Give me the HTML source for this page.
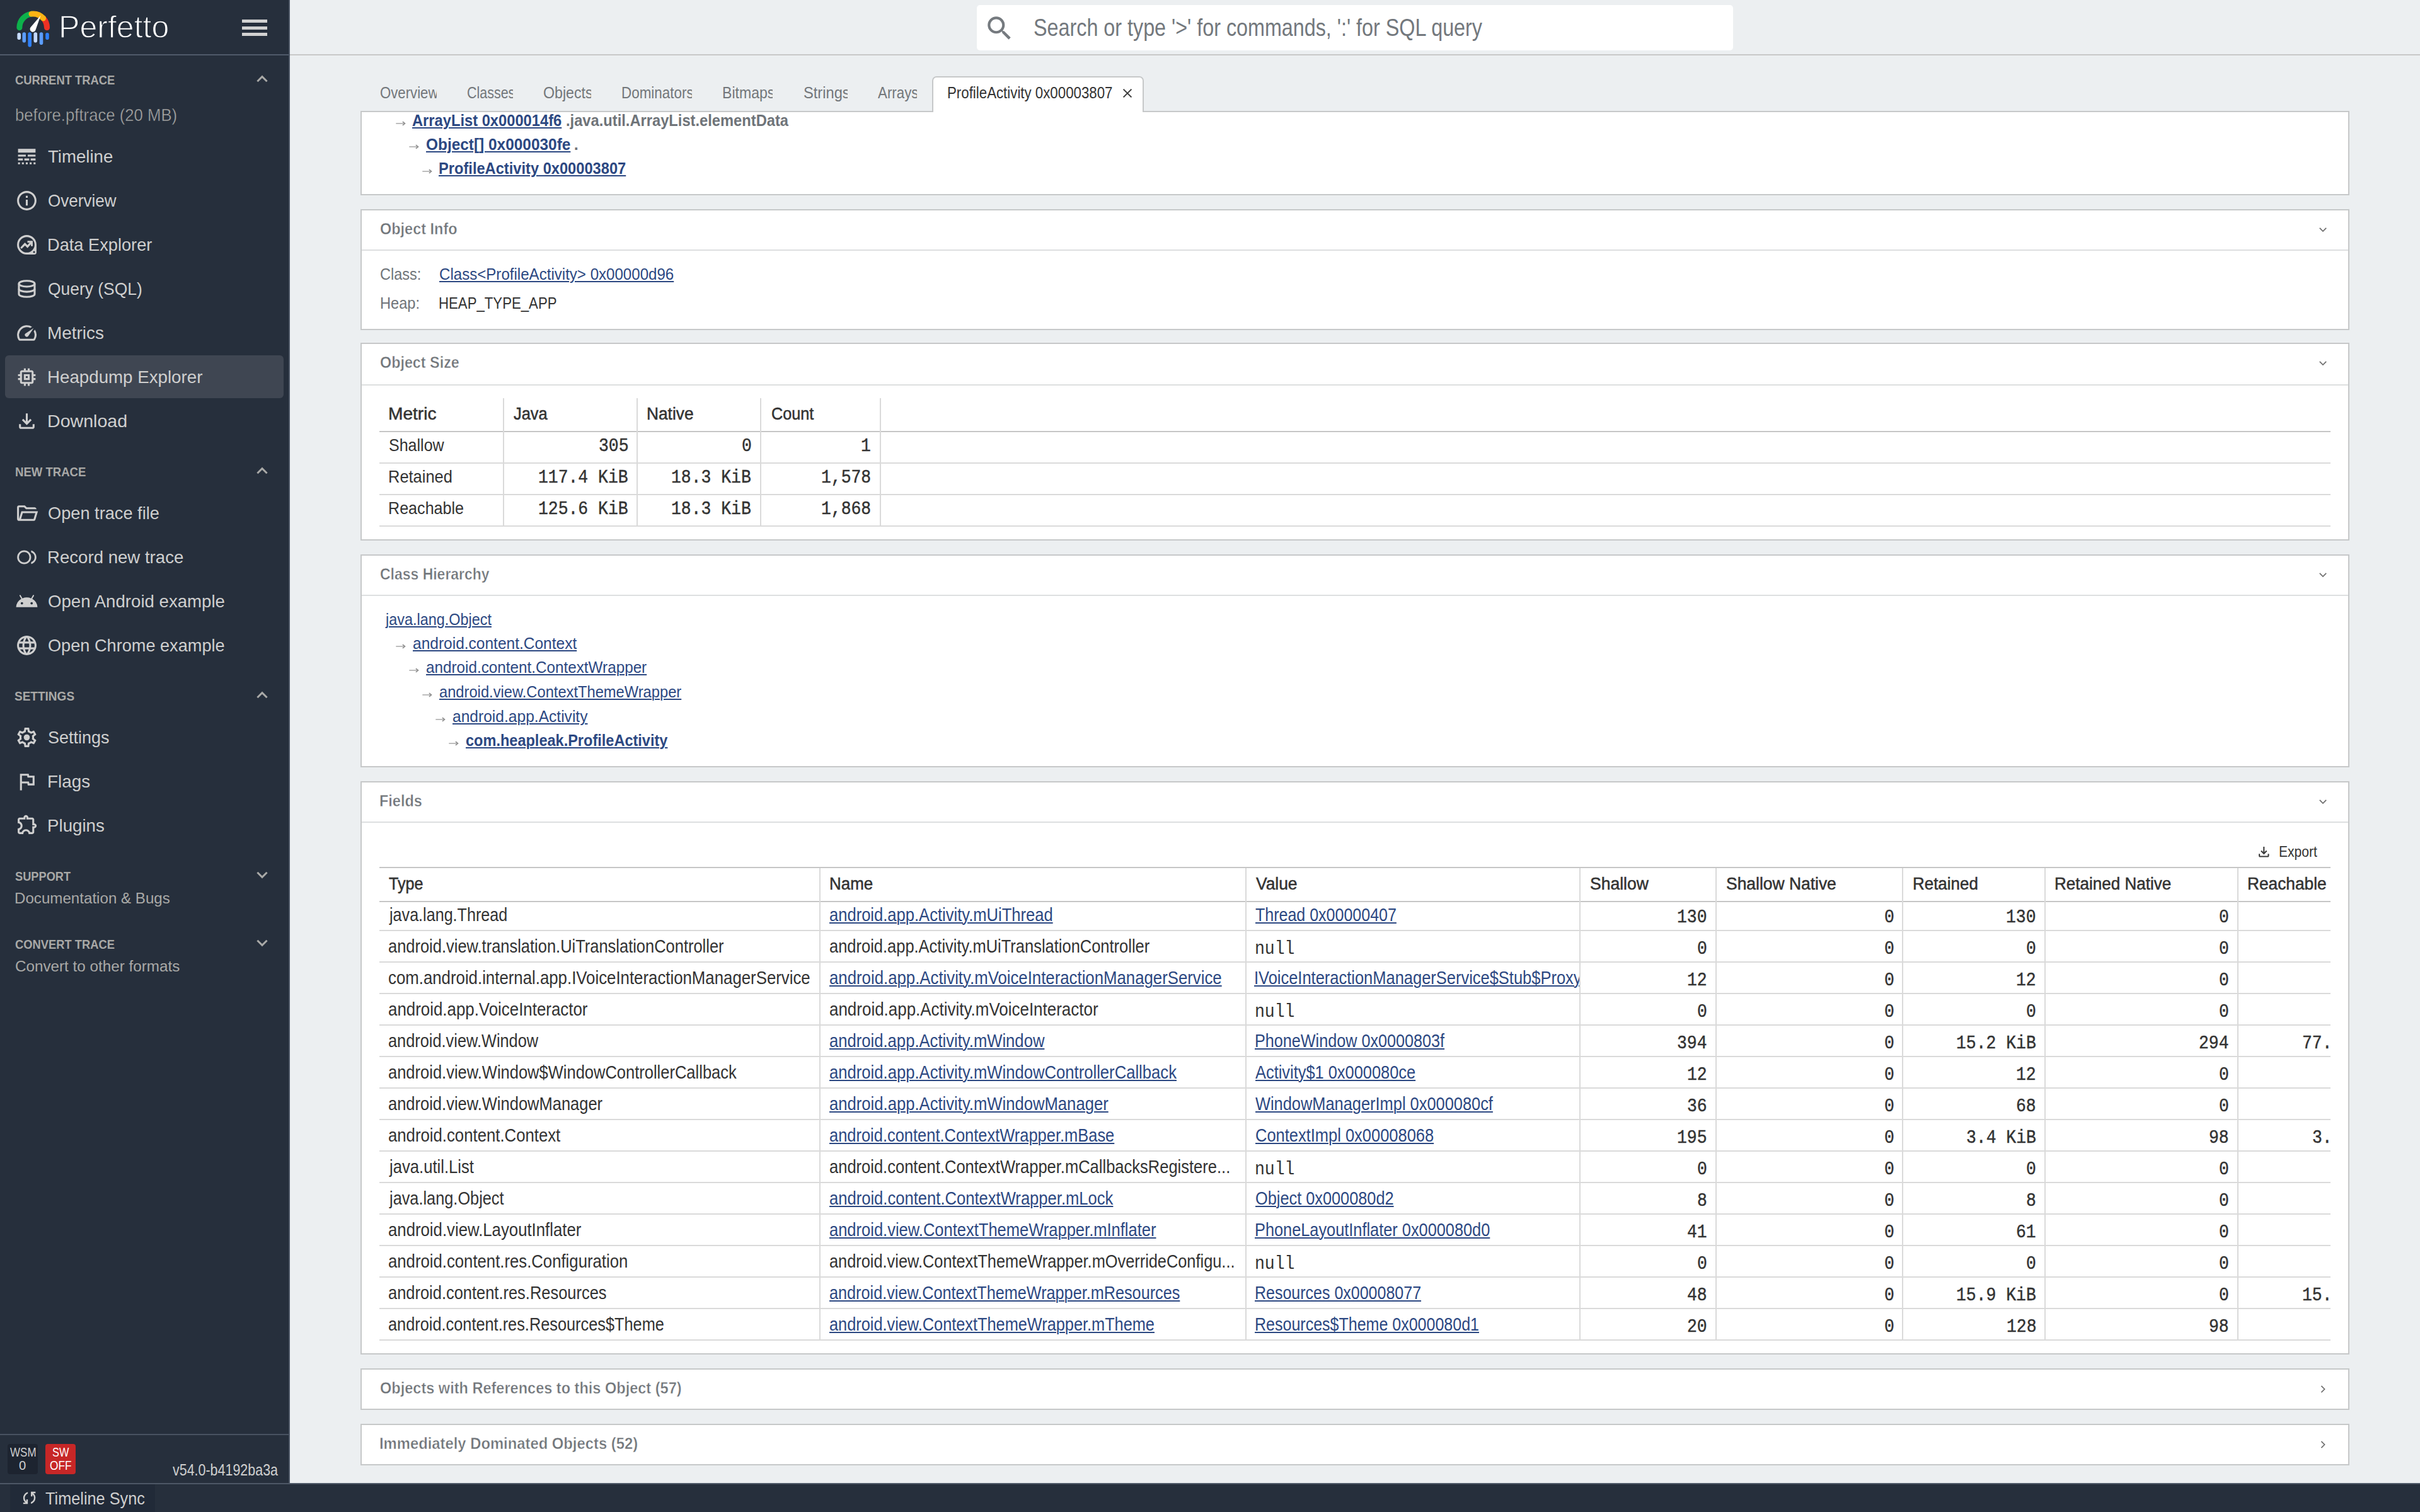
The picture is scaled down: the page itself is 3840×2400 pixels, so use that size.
<!DOCTYPE html>
<html lang="en"><head><meta charset="utf-8"><title>Perfetto UI - Heapdump Explorer</title><style>
html,body{margin:0;padding:0}
body{width:3840px;height:2400px;position:relative;overflow:hidden;background:#eceff1;font-family:"Liberation Sans",sans-serif}
#app div,#app svg,#app span.t{position:absolute}
.t{white-space:pre;line-height:1;transform-origin:0 0;display:block}
.m{font-family:"Liberation Mono",monospace}
.b{font-weight:bold}
.u{text-decoration:underline;text-decoration-thickness:2px;text-underline-offset:2px}
.clip{overflow:hidden}
</style></head>
<body><div id="app">
<div style="left:0px;top:0px;width:458px;height:2354px;background:#262f3c;"></div>
<div style="left:458px;top:0px;width:2px;height:2354px;background:#485261;"></div>
<div style="left:0px;top:86px;width:458px;height:2px;background:#505a6a;"></div>
<div style="left:384px;top:31px;width:40px;height:5px;background:#d2d2d2;"></div>
<div style="left:384px;top:41.5px;width:40px;height:5px;background:#d2d2d2;"></div>
<div style="left:384px;top:52px;width:40px;height:5px;background:#d2d2d2;"></div>
<div style="left:8px;top:564px;width:442px;height:68px;background:#3f4652;border-radius:6px"></div>
<div style="left:0px;top:2276px;width:458px;height:2px;background:#485261;"></div>
<div style="left:12px;top:2292px;width:48px;height:48px;background:#1d2430;border-radius:4px"></div>
<div style="left:72px;top:2292px;width:48px;height:48px;background:#c72727;border-radius:4px"></div>
<div style="left:0px;top:2354px;width:3840px;height:46px;background:#262f3c;"></div>
<div style="left:0px;top:2354px;width:3840px;height:2px;background:#4d5766;"></div>
<div style="left:16px;top:2356px;width:230px;height:44px;background:#212a38;"></div>
<div style="left:460px;top:86px;width:3380px;height:2px;background:#c8c8c8;"></div>
<div style="left:1550px;top:8px;width:1200px;height:72px;background:#ffffff;border-radius:5px"></div>
<div style="left:572px;top:176px;width:3156px;height:2px;background:#c6c8c9;"></div>
<div style="left:1479px;top:121px;width:336px;height:57px;background:#c6c8c9;border-radius:7px 7px 0 0"></div>
<div style="left:1481px;top:123px;width:332px;height:56px;background:#ffffff;border-radius:5px 5px 0 0"></div>
<div style="left:572px;top:176px;width:2px;height:134px;background:#c6c8c9;"></div>
<div style="left:3726px;top:176px;width:2px;height:134px;background:#c6c8c9;"></div>
<div style="left:572px;top:308px;width:3156px;height:2px;background:#c6c8c9;"></div>
<div style="left:574px;top:178px;width:3152px;height:130px;background:#ffffff;"></div>
<div style="left:572px;top:332px;width:3156px;height:192px;background:#c6c8c9;"></div>
<div style="left:574px;top:334px;width:3152px;height:188px;background:#ffffff;"></div>
<div style="left:574px;top:396px;width:3152px;height:2px;background:#dddfe0;"></div>
<div style="left:572px;top:544px;width:3156px;height:314px;background:#c6c8c9;"></div>
<div style="left:574px;top:546px;width:3152px;height:310px;background:#ffffff;"></div>
<div style="left:574px;top:610px;width:3152px;height:2px;background:#dddfe0;"></div>
<div style="left:602px;top:684px;width:3096px;height:2px;background:#c6c6c6;"></div>
<div style="left:602px;top:734px;width:3096px;height:2px;background:#dadada;"></div>
<div style="left:602px;top:784px;width:3096px;height:2px;background:#dadada;"></div>
<div style="left:602px;top:834px;width:3096px;height:2px;background:#dadada;"></div>
<div style="left:798px;top:632px;width:2px;height:204px;background:#dadada;"></div>
<div style="left:1010px;top:632px;width:2px;height:204px;background:#dadada;"></div>
<div style="left:1206px;top:632px;width:2px;height:204px;background:#dadada;"></div>
<div style="left:1396px;top:632px;width:2px;height:204px;background:#dadada;"></div>
<div style="left:572px;top:880px;width:3156px;height:338px;background:#c6c8c9;"></div>
<div style="left:574px;top:882px;width:3152px;height:334px;background:#ffffff;"></div>
<div style="left:574px;top:944px;width:3152px;height:2px;background:#dddfe0;"></div>
<div style="left:572px;top:1240px;width:3156px;height:910px;background:#c6c8c9;"></div>
<div style="left:574px;top:1242px;width:3152px;height:906px;background:#ffffff;"></div>
<div style="left:574px;top:1304px;width:3152px;height:2px;background:#dddfe0;"></div>
<div style="left:602px;top:1376px;width:3096px;height:2px;background:#c6c6c6;"></div>
<div style="left:602px;top:1430px;width:3096px;height:2px;background:#c6c6c6;"></div>
<div style="left:602px;top:1476px;width:3096px;height:2px;background:#dadada;"></div>
<div style="left:602px;top:1526px;width:3096px;height:2px;background:#dadada;"></div>
<div style="left:602px;top:1576px;width:3096px;height:2px;background:#dadada;"></div>
<div style="left:602px;top:1626px;width:3096px;height:2px;background:#dadada;"></div>
<div style="left:602px;top:1676px;width:3096px;height:2px;background:#dadada;"></div>
<div style="left:602px;top:1726px;width:3096px;height:2px;background:#dadada;"></div>
<div style="left:602px;top:1776px;width:3096px;height:2px;background:#dadada;"></div>
<div style="left:602px;top:1826px;width:3096px;height:2px;background:#dadada;"></div>
<div style="left:602px;top:1876px;width:3096px;height:2px;background:#dadada;"></div>
<div style="left:602px;top:1926px;width:3096px;height:2px;background:#dadada;"></div>
<div style="left:602px;top:1976px;width:3096px;height:2px;background:#dadada;"></div>
<div style="left:602px;top:2026px;width:3096px;height:2px;background:#dadada;"></div>
<div style="left:602px;top:2076px;width:3096px;height:2px;background:#dadada;"></div>
<div style="left:602px;top:2126px;width:3096px;height:2px;background:#dadada;"></div>
<div style="left:1300px;top:1378px;width:2px;height:750px;background:#dadada;"></div>
<div style="left:1976px;top:1378px;width:2px;height:750px;background:#dadada;"></div>
<div style="left:2506px;top:1378px;width:2px;height:750px;background:#dadada;"></div>
<div style="left:2722px;top:1378px;width:2px;height:750px;background:#dadada;"></div>
<div style="left:3018px;top:1378px;width:2px;height:750px;background:#dadada;"></div>
<div style="left:3244px;top:1378px;width:2px;height:750px;background:#dadada;"></div>
<div style="left:3550px;top:1378px;width:2px;height:750px;background:#dadada;"></div>
<div style="left:572px;top:2172px;width:3156px;height:66px;background:#c6c8c9;"></div>
<div style="left:574px;top:2174px;width:3152px;height:62px;background:#ffffff;"></div>
<div style="left:572px;top:2260px;width:3156px;height:66px;background:#c6c8c9;"></div>
<div style="left:574px;top:2262px;width:3152px;height:62px;background:#ffffff;"></div>
<span class="t" style="left:93.25px;top:18.00px;font-size:50.72px;color:#ffffff;transform:scaleX(0.9872);-webkit-text-stroke:1.3px #262f3c">Perfetto</span>
<span class="t b" style="left:23.51px;top:117.00px;font-size:20.72px;color:#a9a9a7;transform:scaleX(0.8876)">CURRENT TRACE</span>
<span class="t" style="left:23.59px;top:168.00px;font-size:28.41px;color:#a9a9a7;transform:scaleX(0.9046);-webkit-text-stroke:0.5px #262f3c">before.pftrace (20 MB)</span>
<span class="t b" style="left:23.50px;top:739.00px;font-size:20.72px;color:#a9a9a7;transform:scaleX(0.8960)">NEW TRACE</span>
<span class="t b" style="left:23.48px;top:1095.00px;font-size:20.72px;color:#a9a9a7;transform:scaleX(0.9176)">SETTINGS</span>
<span class="t b" style="left:23.52px;top:1381.00px;font-size:20.72px;color:#a9a9a7;transform:scaleX(0.8798)">SUPPORT</span>
<span class="t" style="left:23.24px;top:1414.00px;font-size:24.64px;color:#a9a9a7;transform:scaleX(0.9799)">Documentation &amp; Bugs</span>
<span class="t b" style="left:23.51px;top:1489.00px;font-size:20.72px;color:#a9a9a7;transform:scaleX(0.8859)">CONVERT TRACE</span>
<span class="t" style="left:24.22px;top:1522.00px;font-size:24.64px;color:#a9a9a7;transform:scaleX(0.9841)">Convert to other formats</span>
<span class="t" style="left:76.23px;top:234.00px;font-size:28.41px;color:#cfcfcf;transform:scaleX(0.9712)">Timeline</span>
<span class="t" style="left:76.28px;top:304.00px;font-size:28.41px;color:#cfcfcf;transform:scaleX(0.9171)">Overview</span>
<span class="t" style="left:75.28px;top:374.00px;font-size:28.41px;color:#cfcfcf;transform:scaleX(0.9579)">Data Explorer</span>
<span class="t" style="left:76.27px;top:444.00px;font-size:28.41px;color:#cfcfcf;transform:scaleX(0.9304)">Query (SQL)</span>
<span class="t" style="left:75.23px;top:514.00px;font-size:28.41px;color:#cfcfcf;transform:scaleX(0.9831)">Metrics</span>
<span class="t" style="left:75.25px;top:584.00px;font-size:28.41px;color:#cfcfcf;transform:scaleX(0.9752)">Heapdump Explorer</span>
<span class="t" style="left:75.19px;top:654.00px;font-size:28.41px;color:#cfcfcf;transform:scaleX(1.0065)">Download</span>
<span class="t" style="left:76.24px;top:800.00px;font-size:28.41px;color:#cfcfcf;transform:scaleX(0.9574)">Open trace file</span>
<span class="t" style="left:75.26px;top:870.00px;font-size:28.41px;color:#cfcfcf;transform:scaleX(0.9717)">Record new trace</span>
<span class="t" style="left:76.23px;top:940.00px;font-size:28.41px;color:#cfcfcf;transform:scaleX(0.9721)">Open Android example</span>
<span class="t" style="left:76.24px;top:1010.00px;font-size:28.41px;color:#cfcfcf;transform:scaleX(0.9555)">Open Chrome example</span>
<span class="t" style="left:76.25px;top:1156.00px;font-size:28.41px;color:#cfcfcf;transform:scaleX(0.9505)">Settings</span>
<span class="t" style="left:75.24px;top:1226.00px;font-size:28.41px;color:#cfcfcf;transform:scaleX(0.9806)">Flags</span>
<span class="t" style="left:75.25px;top:1296.00px;font-size:28.41px;color:#cfcfcf;transform:scaleX(0.9756)">Plugins</span>
<span class="t" style="left:16.20px;top:2296.00px;font-size:19.42px;color:#cfcfcf;transform:scaleX(0.8761)">WSM</span>
<span class="t" style="left:30.36px;top:2317.00px;font-size:19.42px;color:#cfcfcf;transform:scaleX(1.0444)">0</span>
<span class="t" style="left:82.56px;top:2296.00px;font-size:19.42px;color:#ffffff;transform:scaleX(0.8433)">SW</span>
<span class="t" style="left:79.11px;top:2317.00px;font-size:19.42px;color:#ffffff;transform:scaleX(0.8919)">OFF</span>
<span class="t" style="left:274.40px;top:2321.00px;font-size:24.93px;color:#cfcfcf;transform:scaleX(0.8608)">v54.0-b4192ba3a</span>
<span class="t" style="left:71.70px;top:2365.00px;font-size:28.12px;color:#cfcfcf;transform:scaleX(0.9000)">Timeline Sync</span>
<span class="t" style="left:1639.92px;top:25.00px;font-size:38.55px;color:#73787d;transform:scaleX(0.8380)">Search or type &#x27;&gt;&#x27; for commands, &#x27;:&#x27; for SQL query</span>
<div class="clip" style="left:599.8px;top:135.00px;width:92.80000000000007px;height:33.2px"><span class="t" style="left:3.13px;top:0px;font-size:25.51px;color:#73777b;transform:scaleX(0.8695)">Overview</span></div>
<div class="clip" style="left:737.8px;top:135.00px;width:76.40000000000009px;height:33.2px"><span class="t" style="left:3.16px;top:0px;font-size:25.51px;color:#73777b;transform:scaleX(0.8416)">Classes</span></div>
<div class="clip" style="left:859.4px;top:135.00px;width:78.80000000000007px;height:33.2px"><span class="t" style="left:3.09px;top:0px;font-size:25.51px;color:#73777b;transform:scaleX(0.9094)">Objects</span></div>
<div class="clip" style="left:984.2px;top:135.00px;width:114.0px;height:33.2px"><span class="t" style="left:2.24px;top:0px;font-size:25.51px;color:#73777b;transform:scaleX(0.8789)">Dominators</span></div>
<div class="clip" style="left:1144.2px;top:135.00px;width:82.0px;height:33.2px"><span class="t" style="left:2.19px;top:0px;font-size:25.51px;color:#73777b;transform:scaleX(0.9045)">Bitmaps</span></div>
<div class="clip" style="left:1271.6px;top:135.00px;width:73.0px;height:33.2px"><span class="t" style="left:3.07px;top:0px;font-size:25.51px;color:#73777b;transform:scaleX(0.9286)">Strings</span></div>
<div class="clip" style="left:1389.2px;top:135.00px;width:65.39999999999986px;height:33.2px"><span class="t" style="left:4.00px;top:0px;font-size:25.51px;color:#73777b;transform:scaleX(0.8753)">Arrays</span></div>
<span class="t" style="left:1502.85px;top:135.00px;font-size:25.51px;color:#333333;transform:scaleX(0.8734)">ProfileActivity 0x00003807</span>
<span class="t b u" style="left:654.27px;top:179.00px;font-size:25.36px;color:#2c4882;transform:scaleX(0.9349)">ArrayList 0x000014f6</span>
<span class="t b" style="left:897.73px;top:179.00px;font-size:25.36px;color:#6f7479;transform:scaleX(0.9346)">.java.util.ArrayList.elementData</span>
<span class="t b u" style="left:675.64px;top:217.00px;font-size:25.36px;color:#2c4882;transform:scaleX(0.9627)">Object[] 0x000030fe</span>
<span class="t b" style="left:910.80px;top:217.00px;font-size:25.36px;color:#6f7479">.</span>
<span class="t b u" style="left:695.93px;top:255.00px;font-size:25.36px;color:#2c4882;transform:scaleX(0.9329)">ProfileActivity 0x00003807</span>
<span class="t b" style="left:603.07px;top:351.00px;font-size:25.22px;color:#6f7479;transform:scaleX(0.9308);-webkit-text-stroke:0.45px #ffffff">Object Info</span>
<span class="t" style="left:603.07px;top:423.00px;font-size:25.22px;color:#6f7479;transform:scaleX(0.9313)">Class:</span>
<span class="t u" style="left:696.84px;top:423.00px;font-size:25.22px;color:#2c4882;transform:scaleX(0.9552)">Class&lt;ProfileActivity&gt; 0x00000d96</span>
<span class="t" style="left:602.73px;top:469.00px;font-size:25.22px;color:#6f7479;transform:scaleX(0.9365)">Heap:</span>
<span class="t" style="left:696.44px;top:469.00px;font-size:25.22px;color:#333333;transform:scaleX(0.8800)">HEAP_TYPE_APP</span>
<span class="t b" style="left:603.07px;top:563.00px;font-size:25.22px;color:#6f7479;transform:scaleX(0.9254);-webkit-text-stroke:0.45px #ffffff">Object Size</span>
<span class="t" style="left:616.00px;top:643.00px;font-size:28.12px;color:#333333;-webkit-text-stroke:0.55px #333333">Metric</span>
<span class="t" style="left:815.40px;top:643.00px;font-size:28.12px;color:#333333;transform:scaleX(0.9051);-webkit-text-stroke:0.55px #333333">Java</span>
<span class="t" style="left:1026.13px;top:643.00px;font-size:28.12px;color:#333333;transform:scaleX(0.9351);-webkit-text-stroke:0.55px #333333">Native</span>
<span class="t" style="left:1223.50px;top:643.00px;font-size:28.12px;color:#333333;transform:scaleX(0.8973);-webkit-text-stroke:0.55px #333333">Count</span>
<span class="t" style="left:616.52px;top:692.00px;font-size:28.41px;color:#333333;transform:scaleX(0.8808)">Shallow</span>
<span class="t m" style="left:949.74px;top:694.00px;font-size:29.55px;color:#333333;transform:scaleX(0.8935);-webkit-text-stroke:0.45px #333333">305</span>
<span class="t m" style="left:1177.10px;top:694.00px;font-size:29.55px;color:#333333;transform:scaleX(0.8935);-webkit-text-stroke:0.45px #333333">0</span>
<span class="t m" style="left:1366.30px;top:694.00px;font-size:29.55px;color:#333333;transform:scaleX(0.8935);-webkit-text-stroke:0.45px #333333">1</span>
<span class="t" style="left:615.61px;top:742.00px;font-size:28.41px;color:#333333;transform:scaleX(0.8964)">Retained</span>
<span class="t m" style="left:854.13px;top:744.00px;font-size:29.55px;color:#333333;transform:scaleX(0.8935);-webkit-text-stroke:0.45px #333333">117.4 KiB</span>
<span class="t m" style="left:1065.41px;top:744.00px;font-size:29.55px;color:#333333;transform:scaleX(0.8935);-webkit-text-stroke:0.45px #333333">18.3 KiB</span>
<span class="t m" style="left:1302.86px;top:744.00px;font-size:29.55px;color:#333333;transform:scaleX(0.8935);-webkit-text-stroke:0.45px #333333">1,578</span>
<span class="t" style="left:615.63px;top:792.00px;font-size:28.41px;color:#333333;transform:scaleX(0.8842)">Reachable</span>
<span class="t m" style="left:854.13px;top:794.00px;font-size:29.55px;color:#333333;transform:scaleX(0.8935);-webkit-text-stroke:0.45px #333333">125.6 KiB</span>
<span class="t m" style="left:1065.41px;top:794.00px;font-size:29.55px;color:#333333;transform:scaleX(0.8935);-webkit-text-stroke:0.45px #333333">18.3 KiB</span>
<span class="t m" style="left:1302.86px;top:794.00px;font-size:29.55px;color:#333333;transform:scaleX(0.8935);-webkit-text-stroke:0.45px #333333">1,868</span>
<span class="t b" style="left:603.09px;top:899.00px;font-size:25.22px;color:#6f7479;transform:scaleX(0.9105);-webkit-text-stroke:0.45px #ffffff">Class Hierarchy</span>
<span class="t u" style="left:611.52px;top:971.00px;font-size:25.36px;color:#2c4882;transform:scaleX(0.9235)">java.lang.Object</span>
<span class="t u" style="left:654.63px;top:1009.00px;font-size:25.36px;color:#2c4882;transform:scaleX(0.9664)">android.content.Context</span>
<span class="t u" style="left:675.64px;top:1047.00px;font-size:25.36px;color:#2c4882;transform:scaleX(0.9567)">android.content.ContextWrapper</span>
<span class="t u" style="left:696.67px;top:1086.00px;font-size:25.36px;color:#2c4882;transform:scaleX(0.9346)">android.view.ContextThemeWrapper</span>
<span class="t u" style="left:717.63px;top:1125.00px;font-size:25.36px;color:#2c4882;transform:scaleX(0.9691)">android.app.Activity</span>
<span class="t b u" style="left:738.87px;top:1163.00px;font-size:25.36px;color:#2c4882;transform:scaleX(0.9279)">com.heapleak.ProfileActivity</span>
<span class="t b" style="left:602.14px;top:1259.00px;font-size:25.22px;color:#6f7479;transform:scaleX(0.9314);-webkit-text-stroke:0.45px #ffffff">Fields</span>
<span class="t" style="left:3616.27px;top:1340.00px;font-size:24.35px;color:#333333;transform:scaleX(0.8647)">Export</span>
<span class="t" style="left:616.51px;top:1389.00px;font-size:28.12px;color:#333333;transform:scaleX(0.8949);-webkit-text-stroke:0.55px #333333">Type</span>
<span class="t" style="left:1316.36px;top:1389.00px;font-size:28.12px;color:#333333;transform:scaleX(0.9222);-webkit-text-stroke:0.55px #333333">Name</span>
<span class="t" style="left:1993.40px;top:1389.00px;font-size:28.12px;color:#333333;transform:scaleX(0.9391);-webkit-text-stroke:0.55px #333333">Value</span>
<span class="t" style="left:2522.86px;top:1389.00px;font-size:28.12px;color:#333333;transform:scaleX(0.9429);-webkit-text-stroke:0.55px #333333">Shallow</span>
<span class="t" style="left:2738.66px;top:1389.00px;font-size:28.12px;color:#333333;transform:scaleX(0.9402);-webkit-text-stroke:0.55px #333333">Shallow Native</span>
<span class="t" style="left:3034.55px;top:1389.00px;font-size:28.12px;color:#333333;transform:scaleX(0.9229);-webkit-text-stroke:0.55px #333333">Retained</span>
<span class="t" style="left:3260.35px;top:1389.00px;font-size:28.12px;color:#333333;transform:scaleX(0.9259);-webkit-text-stroke:0.55px #333333">Retained Native</span>
<span class="t" style="left:3566.33px;top:1389.00px;font-size:28.12px;color:#333333;transform:scaleX(0.9344);-webkit-text-stroke:0.55px #333333">Reachable</span>
<span class="t" style="left:617.68px;top:1438.00px;font-size:28.7px;color:#333333;transform:scaleX(0.8761)">java.lang.Thread</span>
<span class="t u" style="left:1315.91px;top:1438.00px;font-size:28.7px;color:#2c4882;transform:scaleX(0.8909)">android.app.Activity.mUiThread</span>
<span class="t u" style="left:1991.53px;top:1438.00px;font-size:28.7px;color:#2c4882;transform:scaleX(0.8717)">Thread 0x00000407</span>
<span class="t m" style="left:2661.14px;top:1442.00px;font-size:29.55px;color:#333333;transform:scaleX(0.8935);-webkit-text-stroke:0.45px #333333">130</span>
<span class="t m" style="left:2989.50px;top:1442.00px;font-size:29.55px;color:#333333;transform:scaleX(0.8935);-webkit-text-stroke:0.45px #333333">0</span>
<span class="t m" style="left:3183.14px;top:1442.00px;font-size:29.55px;color:#333333;transform:scaleX(0.8935);-webkit-text-stroke:0.45px #333333">130</span>
<span class="t m" style="left:3521.30px;top:1442.00px;font-size:29.55px;color:#333333;transform:scaleX(0.8935);-webkit-text-stroke:0.45px #333333">0</span>
<span class="t" style="left:615.91px;top:1488.00px;font-size:28.7px;color:#333333;transform:scaleX(0.8875)">android.view.translation.UiTranslationController</span>
<span class="t" style="left:1315.91px;top:1488.00px;font-size:28.7px;color:#333333;transform:scaleX(0.8879)">android.app.Activity.mUiTranslationController</span>
<span class="t m" style="left:1990.72px;top:1492.00px;font-size:29.55px;color:#333333;transform:scaleX(0.8935)">null</span>
<span class="t m" style="left:2693.30px;top:1492.00px;font-size:29.55px;color:#333333;transform:scaleX(0.8935);-webkit-text-stroke:0.45px #333333">0</span>
<span class="t m" style="left:2989.50px;top:1492.00px;font-size:29.55px;color:#333333;transform:scaleX(0.8935);-webkit-text-stroke:0.45px #333333">0</span>
<span class="t m" style="left:3215.30px;top:1492.00px;font-size:29.55px;color:#333333;transform:scaleX(0.8935);-webkit-text-stroke:0.45px #333333">0</span>
<span class="t m" style="left:3521.30px;top:1492.00px;font-size:29.55px;color:#333333;transform:scaleX(0.8935);-webkit-text-stroke:0.45px #333333">0</span>
<span class="t" style="left:615.90px;top:1538.00px;font-size:28.7px;color:#333333;transform:scaleX(0.8993)">com.android.internal.app.IVoiceInteractionManagerService</span>
<span class="t u" style="left:1315.90px;top:1538.00px;font-size:28.7px;color:#2c4882;transform:scaleX(0.8984)">android.app.Activity.mVoiceInteractionManagerService</span>
<div class="clip" style="left:1988px;top:1538.00px;width:518px;height:37.3px"><span class="t u" style="left:1.74px;top:0px;font-size:28.7px;color:#2c4882;transform:scaleX(0.8877)">IVoiceInteractionManagerService$Stub$Proxy 0x000080cd</span></div>
<span class="t m" style="left:2677.22px;top:1542.00px;font-size:29.55px;color:#333333;transform:scaleX(0.8935);-webkit-text-stroke:0.45px #333333">12</span>
<span class="t m" style="left:2989.50px;top:1542.00px;font-size:29.55px;color:#333333;transform:scaleX(0.8935);-webkit-text-stroke:0.45px #333333">0</span>
<span class="t m" style="left:3199.22px;top:1542.00px;font-size:29.55px;color:#333333;transform:scaleX(0.8935);-webkit-text-stroke:0.45px #333333">12</span>
<span class="t m" style="left:3521.30px;top:1542.00px;font-size:29.55px;color:#333333;transform:scaleX(0.8935);-webkit-text-stroke:0.45px #333333">0</span>
<span class="t" style="left:615.90px;top:1588.00px;font-size:28.7px;color:#333333;transform:scaleX(0.9020)">android.app.VoiceInteractor</span>
<span class="t" style="left:1315.90px;top:1588.00px;font-size:28.7px;color:#333333;transform:scaleX(0.9047)">android.app.Activity.mVoiceInteractor</span>
<span class="t m" style="left:1990.72px;top:1592.00px;font-size:29.55px;color:#333333;transform:scaleX(0.8935)">null</span>
<span class="t m" style="left:2693.30px;top:1592.00px;font-size:29.55px;color:#333333;transform:scaleX(0.8935);-webkit-text-stroke:0.45px #333333">0</span>
<span class="t m" style="left:2989.50px;top:1592.00px;font-size:29.55px;color:#333333;transform:scaleX(0.8935);-webkit-text-stroke:0.45px #333333">0</span>
<span class="t m" style="left:3215.30px;top:1592.00px;font-size:29.55px;color:#333333;transform:scaleX(0.8935);-webkit-text-stroke:0.45px #333333">0</span>
<span class="t m" style="left:3521.30px;top:1592.00px;font-size:29.55px;color:#333333;transform:scaleX(0.8935);-webkit-text-stroke:0.45px #333333">0</span>
<span class="t" style="left:615.92px;top:1638.00px;font-size:28.7px;color:#333333;transform:scaleX(0.8836)">android.view.Window</span>
<span class="t u" style="left:1315.91px;top:1638.00px;font-size:28.7px;color:#2c4882;transform:scaleX(0.8934)">android.app.Activity.mWindow</span>
<span class="t u" style="left:1990.64px;top:1638.00px;font-size:28.7px;color:#2c4882;transform:scaleX(0.8780)">PhoneWindow 0x0000803f</span>
<span class="t m" style="left:2661.14px;top:1642.00px;font-size:29.55px;color:#333333;transform:scaleX(0.8935);-webkit-text-stroke:0.45px #333333">394</span>
<span class="t m" style="left:2989.50px;top:1642.00px;font-size:29.55px;color:#333333;transform:scaleX(0.8935);-webkit-text-stroke:0.45px #333333">0</span>
<span class="t m" style="left:3103.61px;top:1642.00px;font-size:29.55px;color:#333333;transform:scaleX(0.8935);-webkit-text-stroke:0.45px #333333">15.2 KiB</span>
<span class="t m" style="left:3489.14px;top:1642.00px;font-size:29.55px;color:#333333;transform:scaleX(0.8935);-webkit-text-stroke:0.45px #333333">294</span>
<div class="clip" style="left:3600px;top:1642.00px;width:98px;height:38.4px"><span class="t m" style="left:52.89px;top:0px;font-size:29.55px;color:#333333;transform:scaleX(0.8935);-webkit-text-stroke:0.45px #333333">77.2 KiB</span></div>
<span class="t" style="left:615.91px;top:1688.00px;font-size:28.7px;color:#333333;transform:scaleX(0.8889)">android.view.Window$WindowControllerCallback</span>
<span class="t u" style="left:1315.91px;top:1688.00px;font-size:28.7px;color:#2c4882;transform:scaleX(0.8937)">android.app.Activity.mWindowControllerCallback</span>
<span class="t u" style="left:1992.40px;top:1688.00px;font-size:28.7px;color:#2c4882;transform:scaleX(0.8853)">Activity$1 0x000080ce</span>
<span class="t m" style="left:2677.22px;top:1692.00px;font-size:29.55px;color:#333333;transform:scaleX(0.8935);-webkit-text-stroke:0.45px #333333">12</span>
<span class="t m" style="left:2989.50px;top:1692.00px;font-size:29.55px;color:#333333;transform:scaleX(0.8935);-webkit-text-stroke:0.45px #333333">0</span>
<span class="t m" style="left:3199.22px;top:1692.00px;font-size:29.55px;color:#333333;transform:scaleX(0.8935);-webkit-text-stroke:0.45px #333333">12</span>
<span class="t m" style="left:3521.30px;top:1692.00px;font-size:29.55px;color:#333333;transform:scaleX(0.8935);-webkit-text-stroke:0.45px #333333">0</span>
<span class="t" style="left:615.91px;top:1738.00px;font-size:28.7px;color:#333333;transform:scaleX(0.8887)">android.view.WindowManager</span>
<span class="t u" style="left:1315.91px;top:1738.00px;font-size:28.7px;color:#2c4882;transform:scaleX(0.8937)">android.app.Activity.mWindowManager</span>
<span class="t u" style="left:1992.40px;top:1738.00px;font-size:28.7px;color:#2c4882;transform:scaleX(0.8852)">WindowManagerImpl 0x000080cf</span>
<span class="t m" style="left:2677.22px;top:1742.00px;font-size:29.55px;color:#333333;transform:scaleX(0.8935);-webkit-text-stroke:0.45px #333333">36</span>
<span class="t m" style="left:2989.50px;top:1742.00px;font-size:29.55px;color:#333333;transform:scaleX(0.8935);-webkit-text-stroke:0.45px #333333">0</span>
<span class="t m" style="left:3199.22px;top:1742.00px;font-size:29.55px;color:#333333;transform:scaleX(0.8935);-webkit-text-stroke:0.45px #333333">68</span>
<span class="t m" style="left:3521.30px;top:1742.00px;font-size:29.55px;color:#333333;transform:scaleX(0.8935);-webkit-text-stroke:0.45px #333333">0</span>
<span class="t" style="left:615.90px;top:1788.00px;font-size:28.7px;color:#333333;transform:scaleX(0.8970)">android.content.Context</span>
<span class="t u" style="left:1315.91px;top:1788.00px;font-size:28.7px;color:#2c4882;transform:scaleX(0.8872)">android.content.ContextWrapper.mBase</span>
<span class="t u" style="left:1991.51px;top:1788.00px;font-size:28.7px;color:#2c4882;transform:scaleX(0.8877)">ContextImpl 0x00008068</span>
<span class="t m" style="left:2661.14px;top:1792.00px;font-size:29.55px;color:#333333;transform:scaleX(0.8935);-webkit-text-stroke:0.45px #333333">195</span>
<span class="t m" style="left:2989.50px;top:1792.00px;font-size:29.55px;color:#333333;transform:scaleX(0.8935);-webkit-text-stroke:0.45px #333333">0</span>
<span class="t m" style="left:3119.69px;top:1792.00px;font-size:29.55px;color:#333333;transform:scaleX(0.8935);-webkit-text-stroke:0.45px #333333">3.4 KiB</span>
<span class="t m" style="left:3505.22px;top:1792.00px;font-size:29.55px;color:#333333;transform:scaleX(0.8935);-webkit-text-stroke:0.45px #333333">98</span>
<div class="clip" style="left:3600px;top:1792.00px;width:98px;height:38.4px"><span class="t m" style="left:68.73px;top:0px;font-size:29.55px;color:#333333;transform:scaleX(0.8935);-webkit-text-stroke:0.45px #333333">3.5 KiB</span></div>
<span class="t" style="left:617.69px;top:1838.00px;font-size:28.7px;color:#333333;transform:scaleX(0.8940)">java.util.List</span>
<span class="t" style="left:1315.91px;top:1838.00px;font-size:28.7px;color:#333333;transform:scaleX(0.8893)">android.content.ContextWrapper.mCallbacksRegistere...</span>
<span class="t m" style="left:1990.72px;top:1842.00px;font-size:29.55px;color:#333333;transform:scaleX(0.8935)">null</span>
<span class="t m" style="left:2693.30px;top:1842.00px;font-size:29.55px;color:#333333;transform:scaleX(0.8935);-webkit-text-stroke:0.45px #333333">0</span>
<span class="t m" style="left:2989.50px;top:1842.00px;font-size:29.55px;color:#333333;transform:scaleX(0.8935);-webkit-text-stroke:0.45px #333333">0</span>
<span class="t m" style="left:3215.30px;top:1842.00px;font-size:29.55px;color:#333333;transform:scaleX(0.8935);-webkit-text-stroke:0.45px #333333">0</span>
<span class="t m" style="left:3521.30px;top:1842.00px;font-size:29.55px;color:#333333;transform:scaleX(0.8935);-webkit-text-stroke:0.45px #333333">0</span>
<span class="t" style="left:617.68px;top:1888.00px;font-size:28.7px;color:#333333;transform:scaleX(0.8826)">java.lang.Object</span>
<span class="t u" style="left:1315.91px;top:1888.00px;font-size:28.7px;color:#2c4882;transform:scaleX(0.8919)">android.content.ContextWrapper.mLock</span>
<span class="t u" style="left:1991.52px;top:1888.00px;font-size:28.7px;color:#2c4882;transform:scaleX(0.8825)">Object 0x000080d2</span>
<span class="t m" style="left:2693.30px;top:1892.00px;font-size:29.55px;color:#333333;transform:scaleX(0.8935);-webkit-text-stroke:0.45px #333333">8</span>
<span class="t m" style="left:2989.50px;top:1892.00px;font-size:29.55px;color:#333333;transform:scaleX(0.8935);-webkit-text-stroke:0.45px #333333">0</span>
<span class="t m" style="left:3215.30px;top:1892.00px;font-size:29.55px;color:#333333;transform:scaleX(0.8935);-webkit-text-stroke:0.45px #333333">8</span>
<span class="t m" style="left:3521.30px;top:1892.00px;font-size:29.55px;color:#333333;transform:scaleX(0.8935);-webkit-text-stroke:0.45px #333333">0</span>
<span class="t" style="left:615.90px;top:1938.00px;font-size:28.7px;color:#333333;transform:scaleX(0.8976)">android.view.LayoutInflater</span>
<span class="t u" style="left:1315.91px;top:1938.00px;font-size:28.7px;color:#2c4882;transform:scaleX(0.8892)">android.view.ContextThemeWrapper.mInflater</span>
<span class="t u" style="left:1990.63px;top:1938.00px;font-size:28.7px;color:#2c4882;transform:scaleX(0.8831)">PhoneLayoutInflater 0x000080d0</span>
<span class="t m" style="left:2677.22px;top:1942.00px;font-size:29.55px;color:#333333;transform:scaleX(0.8935);-webkit-text-stroke:0.45px #333333">41</span>
<span class="t m" style="left:2989.50px;top:1942.00px;font-size:29.55px;color:#333333;transform:scaleX(0.8935);-webkit-text-stroke:0.45px #333333">0</span>
<span class="t m" style="left:3199.22px;top:1942.00px;font-size:29.55px;color:#333333;transform:scaleX(0.8935);-webkit-text-stroke:0.45px #333333">61</span>
<span class="t m" style="left:3521.30px;top:1942.00px;font-size:29.55px;color:#333333;transform:scaleX(0.8935);-webkit-text-stroke:0.45px #333333">0</span>
<span class="t" style="left:615.90px;top:1988.00px;font-size:28.7px;color:#333333;transform:scaleX(0.8964)">android.content.res.Configuration</span>
<span class="t" style="left:1315.92px;top:1988.00px;font-size:28.7px;color:#333333;transform:scaleX(0.8837)">android.view.ContextThemeWrapper.mOverrideConfigu...</span>
<span class="t m" style="left:1990.72px;top:1992.00px;font-size:29.55px;color:#333333;transform:scaleX(0.8935)">null</span>
<span class="t m" style="left:2693.30px;top:1992.00px;font-size:29.55px;color:#333333;transform:scaleX(0.8935);-webkit-text-stroke:0.45px #333333">0</span>
<span class="t m" style="left:2989.50px;top:1992.00px;font-size:29.55px;color:#333333;transform:scaleX(0.8935);-webkit-text-stroke:0.45px #333333">0</span>
<span class="t m" style="left:3215.30px;top:1992.00px;font-size:29.55px;color:#333333;transform:scaleX(0.8935);-webkit-text-stroke:0.45px #333333">0</span>
<span class="t m" style="left:3521.30px;top:1992.00px;font-size:29.55px;color:#333333;transform:scaleX(0.8935);-webkit-text-stroke:0.45px #333333">0</span>
<span class="t" style="left:615.91px;top:2038.00px;font-size:28.7px;color:#333333;transform:scaleX(0.8869)">android.content.res.Resources</span>
<span class="t u" style="left:1315.92px;top:2038.00px;font-size:28.7px;color:#2c4882;transform:scaleX(0.8796)">android.view.ContextThemeWrapper.mResources</span>
<span class="t u" style="left:1990.66px;top:2038.00px;font-size:28.7px;color:#2c4882;transform:scaleX(0.8713)">Resources 0x00008077</span>
<span class="t m" style="left:2677.22px;top:2042.00px;font-size:29.55px;color:#333333;transform:scaleX(0.8935);-webkit-text-stroke:0.45px #333333">48</span>
<span class="t m" style="left:2989.50px;top:2042.00px;font-size:29.55px;color:#333333;transform:scaleX(0.8935);-webkit-text-stroke:0.45px #333333">0</span>
<span class="t m" style="left:3103.61px;top:2042.00px;font-size:29.55px;color:#333333;transform:scaleX(0.8935);-webkit-text-stroke:0.45px #333333">15.9 KiB</span>
<span class="t m" style="left:3521.30px;top:2042.00px;font-size:29.55px;color:#333333;transform:scaleX(0.8935);-webkit-text-stroke:0.45px #333333">0</span>
<div class="clip" style="left:3600px;top:2042.00px;width:98px;height:38.4px"><span class="t m" style="left:52.89px;top:0px;font-size:29.55px;color:#333333;transform:scaleX(0.8935);-webkit-text-stroke:0.45px #333333">15.9 KiB</span></div>
<span class="t" style="left:615.92px;top:2088.00px;font-size:28.7px;color:#333333;transform:scaleX(0.8830)">android.content.res.Resources$Theme</span>
<span class="t u" style="left:1315.92px;top:2088.00px;font-size:28.7px;color:#2c4882;transform:scaleX(0.8825)">android.view.ContextThemeWrapper.mTheme</span>
<span class="t u" style="left:1990.66px;top:2088.00px;font-size:28.7px;color:#2c4882;transform:scaleX(0.8719)">Resources$Theme 0x000080d1</span>
<span class="t m" style="left:2677.22px;top:2092.00px;font-size:29.55px;color:#333333;transform:scaleX(0.8935);-webkit-text-stroke:0.45px #333333">20</span>
<span class="t m" style="left:2989.50px;top:2092.00px;font-size:29.55px;color:#333333;transform:scaleX(0.8935);-webkit-text-stroke:0.45px #333333">0</span>
<span class="t m" style="left:3184.03px;top:2092.00px;font-size:29.55px;color:#333333;transform:scaleX(0.8935);-webkit-text-stroke:0.45px #333333">128</span>
<span class="t m" style="left:3505.22px;top:2092.00px;font-size:29.55px;color:#333333;transform:scaleX(0.8935);-webkit-text-stroke:0.45px #333333">98</span>
<span class="t b" style="left:603.07px;top:2191.00px;font-size:25.22px;color:#6f7479;transform:scaleX(0.9331);-webkit-text-stroke:0.45px #ffffff">Objects with References to this Object (57)</span>
<span class="t b" style="left:602.11px;top:2279.00px;font-size:25.22px;color:#6f7479;transform:scaleX(0.9439);-webkit-text-stroke:0.45px #ffffff">Immediately Dominated Objects (52)</span>
<svg style="left:20px;top:12px" width="66" height="66" viewBox="20 12 66 66" fill="none">
<path d="M30.9 43.75A21.8 21.8 0 0 1 50.0 22.1" stroke="#0db14b" stroke-width="9" stroke-linecap="round"/>
<path d="M68.6 28.9A21.8 21.8 0 0 1 74.5 43.75" stroke="#ee3124" stroke-width="9" stroke-linecap="round"/>
<path d="M50.0 22.1A21.8 21.8 0 0 1 68.6 28.9" stroke="#fcb414" stroke-width="9" stroke-linecap="round"/>
<path d="M64.6 24.4L56.6 47.2A4.6 4.6 0 1 1 48.6 43.2Z" fill="#fff"/>
<rect x="27.4" y="52" width="5.6" height="11" rx="2.8" fill="#c5dafe"/>
<rect x="35.5" y="51.2" width="5.6" height="16.3" rx="2.8" fill="#5c9dff"/>
<rect x="44.4" y="51.2" width="5.6" height="23.4" rx="2.8" fill="#2f80fa"/>
<rect x="53.5" y="51.2" width="5.6" height="16.3" rx="2.8" fill="#c5dafe"/>
<rect x="62.7" y="51.2" width="5.6" height="19.8" rx="2.8" fill="#5c9dff"/>
<rect x="72.2" y="52" width="5.6" height="11" rx="2.8" fill="#2f80fa"/>
</svg>
<svg style="left:404px;top:116.4px" width="24" height="18" viewBox="0 0 24 18" fill="none"><path d="M4.4 13.2L12 5.6L19.6 13.2" stroke="#a9a9a7" stroke-width="3"/></svg>
<svg style="left:404px;top:738.4px" width="24" height="18" viewBox="0 0 24 18" fill="none"><path d="M4.4 13.2L12 5.6L19.6 13.2" stroke="#a9a9a7" stroke-width="3"/></svg>
<svg style="left:404px;top:1094.4px" width="24" height="18" viewBox="0 0 24 18" fill="none"><path d="M4.4 13.2L12 5.6L19.6 13.2" stroke="#a9a9a7" stroke-width="3"/></svg>
<svg style="left:404px;top:1380.1px" width="24" height="18" viewBox="0 0 24 18" fill="none"><path d="M4.4 4.8L12 12.4L19.6 4.8" stroke="#a9a9a7" stroke-width="3"/></svg>
<svg style="left:404px;top:1488.1px" width="24" height="18" viewBox="0 0 24 18" fill="none"><path d="M4.4 4.8L12 12.4L19.6 4.8" stroke="#a9a9a7" stroke-width="3"/></svg>
<svg style="left:23.5px;top:229.5px" width="37" height="37" viewBox="0 0 24 24" fill="#cfcfcf" color="#cfcfcf"><path d="M3 16h5v-2H3v2zm6.5 0h5v-2h-5v2zm6.5 0h5v-2h-5v2zM3 20h2v-2H3v2zm4 0h2v-2H7v2zm4 0h2v-2h-2v2zm4 0h2v-2h-2v2zm4 0h2v-2h-2v2zM3 12h8v-2H3v2zm10 0h8v-2h-8v2zM3 4v4h18V4H3z"/></svg>
<svg style="left:23.5px;top:299.5px" width="37" height="37" viewBox="0 0 24 24" fill="#cfcfcf" color="#cfcfcf"><path d="M11 7h2v2h-2zm0 4h2v6h-2zm1-9C6.48 2 2 6.48 2 12s4.48 10 10 10 10-4.48 10-10S17.52 2 12 2zm0 18c-4.41 0-8-3.59-8-8s3.59-8 8-8 8 3.59 8 8-3.59 8-8 8z"/></svg>
<svg style="left:23.5px;top:369.5px" width="37" height="37" viewBox="0 0 24 24" fill="#cfcfcf" color="#cfcfcf"><path fill-rule="evenodd" d="M12 2A10 10 0 1 0 12 22H19.800a2.200 2.200 0 0 0 2.200-2.200V12A10 10 0 0 0 12 2zM12 4a8 8 0 1 1 0 16a8 8 0 0 1 0-16zM19.500 18.500a1 1 0 1 0 0 2a1 1 0 0 0 0-2z"/><path d="M5.300 14.900l1.350 1.350 3.500-3.500 2.600 2.600 3.500-3.800V13.500h1.900V8h-5.500v1.900h2.250l-2.250 2.450-2.600-2.600z"/></svg>
<svg style="left:23.5px;top:439.5px" width="37" height="37" viewBox="0 0 24 24" fill="#cfcfcf" color="#cfcfcf"><g fill="none" stroke="currentColor" stroke-width="2"><ellipse cx="12" cy="6.700" rx="8.100" ry="3.000"/><path d="M3.900 6.700V17.300a8.100 3.000 0 0 0 16.200 0V6.700"/><path d="M3.900 12a8.100 3.000 0 0 0 16.200 0"/></g></svg>
<svg style="left:23.5px;top:509.5px" width="37" height="37" viewBox="0 0 24 24" fill="#cfcfcf" color="#cfcfcf"><path d="M20.38 8.57l-1.230 1.850a8 8 0 0 1-.220 7.580H5.070A8 8 0 0 1 15.580 6.850l1.850-1.230A10 10 0 0 0 3.350 19a2 2 0 0 0 1.720 1h13.850a2 2 0 0 0 1.740-1 10 10 0 0 0-.270-10.440zm-9.790 6.840a2 2 0 0 0 2.830 0l5.660-8.490-8.490 5.660a2 2 0 0 0 0 2.830z"/></svg>
<svg style="left:23.5px;top:579.5px" width="37" height="37" viewBox="0 0 24 24" fill="#cfcfcf" color="#cfcfcf"><path d="M15 9H9v6h6V9zm-2 4h-2v-2h2v2zm8-2V9h-2V7c0-1.100-.900-2-2-2h-2V3h-2v2h-2V3H9v2H7c-1.100 0-2 .900-2 2v2H3v2h2v2H3v2h2v2c0 1.100.900 2 2 2h2v2h2v-2h2v2h2v-2h2c1.100 0 2-.900 2-2v-2h2v-2h-2v-2h2zm-4 6H7V7h10v10z"/></svg>
<svg style="left:23.5px;top:649.5px" width="37" height="37" viewBox="0 0 24 24" fill="#cfcfcf" color="#cfcfcf"><path d="M12 16l-5-5 1.400-1.450 2.600 2.600V4h2v8.150l2.600-2.600L17 11zm-6 4q-.825 0-1.412-.587T4 18v-3h2v3h12v-3h2v3q0 .825-.587 1.413T18 20z"/></svg>
<svg style="left:23.5px;top:795.5px" width="37" height="37" viewBox="0 0 24 24" fill="#cfcfcf" color="#cfcfcf"><path d="M4 20q-.825 0-1.412-.587T2 18V6q0-.825.588-1.412T4 4h6l2 2h8q.825 0 1.413.588T22 8H11.175l-2-2H4v12l2.400-8h17.100l-2.575 8.575q-.2.650-.738 1.038T19 20zm2.100-2H19l1.800-6H7.900zm0 0l1.800-6zM4 8V6z"/></svg>
<svg style="left:23.5px;top:865.5px" width="37" height="37" viewBox="0 0 24 24" fill="#cfcfcf" color="#cfcfcf"><path transform="translate(12 12) scale(.9) translate(-12 -12)" d="M9 4a8 8 0 1 0 0 16A8 8 0 0 0 9 4zm0 14a6 6 0 1 1 0-12 6 6 0 0 1 0 12zM17 4.260v2.090a5.990 5.990 0 0 1 0 11.300v2.090c3.450-.890 6-4.010 6-7.740s-2.550-6.850-6-7.740z"/></svg>
<svg style="left:23.5px;top:935.5px" width="37" height="37" viewBox="0 0 24 24" fill="#cfcfcf" color="#cfcfcf"><path d="M17.600 9.480l1.840-3.180c.160-.310.040-.690-.260-.850a.637.637 0 0 0-.830.220l-1.880 3.240a11.460 11.460 0 0 0-8.940 0L5.650 5.670a.643.643 0 0 0-.870-.200c-.280.180-.370.540-.220.830L6.400 9.480A10.780 10.780 0 0 0 1 18h22a10.780 10.780 0 0 0-5.400-8.520zM7 15.250a1.250 1.250 0 1 1 0-2.500 1.250 1.250 0 0 1 0 2.500zm10 0a1.250 1.250 0 1 1 0-2.500 1.250 1.250 0 0 1 0 2.500z"/></svg>
<svg style="left:23.5px;top:1005.5px" width="37" height="37" viewBox="0 0 24 24" fill="#cfcfcf" color="#cfcfcf"><path d="M11.990 2C6.470 2 2 6.480 2 12s4.470 10 9.990 10C17.520 22 22 17.520 22 12S17.520 2 11.990 2zm6.930 6h-2.950a15.650 15.650 0 0 0-1.380-3.560A8.030 8.030 0 0 1 18.920 8zM12 4.040c.830 1.200 1.480 2.530 1.910 3.960h-3.820c.430-1.430 1.080-2.760 1.910-3.960zM4.260 14C4.100 13.360 4 12.690 4 12s.100-1.360.260-2h3.380c-.080.660-.140 1.320-.140 2 0 .680.060 1.340.140 2H4.260zm.820 2h2.950c.320 1.250.780 2.450 1.380 3.560A7.987 7.987 0 0 1 5.080 16zm2.950-8H5.080a7.987 7.987 0 0 1 4.330-3.560A15.650 15.650 0 0 0 8.030 8zM12 19.960c-.830-1.200-1.480-2.530-1.910-3.960h3.820c-.430 1.430-1.080 2.760-1.910 3.960zM14.340 14H9.660c-.090-.660-.160-1.320-.160-2 0-.680.070-1.350.160-2h4.680c.090.650.160 1.320.160 2 0 .680-.070 1.340-.160 2zm.250 5.560c.600-1.110 1.060-2.310 1.380-3.560h2.950a8.030 8.030 0 0 1-4.330 3.560zM16.360 14c.080-.660.140-1.320.140-2 0-.680-.060-1.340-.140-2h3.380c.160.640.260 1.310.260 2s-.100 1.360-.260 2h-3.380z"/></svg>
<svg style="left:23.5px;top:1151.5px" width="37" height="37" viewBox="0 0 24 24" fill="#cfcfcf" color="#cfcfcf"><path d="M19.430 12.980c.040-.320.070-.640.070-.980 0-.340-.030-.660-.070-.980l2.110-1.650c.190-.150.240-.420.120-.640l-2-3.460a.5.5 0 0 0-.610-.220l-2.490 1c-.520-.400-1.080-.730-1.690-.980l-.380-2.650A.488.488 0 0 0 14 2h-4c-.250 0-.460.180-.490.420l-.380 2.650c-.610.250-1.170.590-1.690.980l-2.490-1a.566.566 0 0 0-.180-.030c-.170 0-.340.090-.430.250l-2 3.460c-.130.220-.070.490.120.640l2.110 1.650c-.040.320-.070.650-.070.980 0 .330.030.660.070.980l-2.110 1.650c-.190.150-.240.420-.120.640l2 3.460a.5.5 0 0 0 .610.220l2.490-1c.520.400 1.080.730 1.690.980l.380 2.650c.030.240.240.420.490.420h4c.250 0 .460-.180.490-.420l.380-2.650c.610-.250 1.170-.590 1.690-.980l2.490 1c.060.020.120.030.180.030.170 0 .340-.090.430-.250l2-3.460c.120-.220.070-.490-.120-.640l-2.110-1.650zm-1.980-1.710c.040.310.050.520.050.730 0 .210-.020.430-.050.730l-.140 1.130.890.700 1.080.840-.700 1.210-1.270-.510-1.040-.420-.900.680c-.430.320-.840.560-1.250.730l-1.060.430-.160 1.130-.200 1.350h-1.400l-.190-1.350-.160-1.130-1.060-.430c-.430-.180-.830-.410-1.230-.710l-.910-.700-1.060.430-1.270.510-.700-1.210 1.080-.840.890-.700-.140-1.130c-.030-.310-.050-.540-.050-.740s.020-.430.050-.730l.140-1.130-.890-.700-1.080-.840.700-1.210 1.270.510 1.040.420.900-.680c.430-.320.840-.560 1.250-.730l1.060-.430.160-1.130.200-1.350h1.390l.190 1.350.160 1.130 1.060.430c.430.180.830.410 1.230.710l.910.700 1.060-.430 1.270-.510.700 1.210-1.070.850-.890.700.140 1.130zM12 8.900a3.100 3.100 0 1 0 0 6.200a3.100 3.100 0 0 0 0-6.200z"/></svg>
<svg style="left:23.5px;top:1221.5px" width="37" height="37" viewBox="0 0 24 24" fill="#cfcfcf" color="#cfcfcf"><path d="M12.360 6l.400 2H18v6h-3.360l-.400-2H7V6h5.360M14 4H5v17h2v-7h5.600l.400 2h7V6h-5.600L14 4z"/></svg>
<svg style="left:24.5px;top:1289.9px" width="37" height="37" viewBox="0 0 24 24" fill="#cfcfcf" color="#cfcfcf"><path d="M10.500 4.500c.280 0 .500.220.500.500v2h6v6h2c.280 0 .500.220.500.500s-.220.500-.500.500h-2v6h-2.120c-.680-1.750-2.390-3-4.380-3s-3.700 1.250-4.380 3H4v-2.120c1.750-.680 3-2.390 3-4.380 0-1.990-1.240-3.700-2.990-4.380L4 7h6V5c0-.280.220-.500.500-.500m0-2C9.120 2.500 8 3.620 8 5H4c-1.100 0-1.990.900-1.990 2v3.800h.290c1.490 0 2.700 1.210 2.700 2.700s-1.210 2.700-2.700 2.700H2V20c0 1.100.900 2 2 2h3.800v-.300c0-1.490 1.210-2.700 2.700-2.700s2.700 1.210 2.700 2.700v.300H17c1.100 0 2-.900 2-2v-4c1.380 0 2.500-1.120 2.500-2.500S20.380 11 19 11V7c0-1.100-.900-2-2-2h-4c0-1.380-1.120-2.500-2.500-2.500z"/></svg>
<svg style="left:31.500px;top:2363.100px" width="29.200" height="29.200" viewBox="0 -960 960 960" fill="#cfcfcf"><path d="M160-160v-80h110l-16-14q-52-46-73-105t-21-119q0-111 66.500-197.500T400-790v84q-72 26-116 88.500T240-478q0 45 17 87.500t53 78.500l10 10v-98h80v240H160Zm400-10v-84q72-26 116-88.500T720-482q0-45-17-87.500T650-648l-10-10v98h-80v-240h240v80H690l16 14q49 49 71.500 106.500T800-482q0 111-66.500 197.500T560-170Z"/></svg>
<svg style="left:1561.2px;top:19.5px" width="50" height="50" viewBox="0 0 24 24" fill="#757a7f" ><path d="M15.500 14h-.790l-.280-.270A6.471 6.471 0 0 0 16 9.500 6.500 6.500 0 1 0 9.500 16c1.610 0 3.090-.590 4.230-1.570l.270.280v.790l5 4.990L20.490 19l-4.990-5zm-6 0C7.010 14 5 11.990 5 9.500S7.010 5 9.500 5 14 7.010 14 9.500 11.990 14 9.500 14z"/></svg>
<svg style="left:1780px;top:139px" width="18" height="18" viewBox="0 0 18 18" fill="none"><path d="M2.600 2.600L15.400 15.400M15.400 2.600L2.600 15.400" stroke="#3a3a3a" stroke-width="2"/></svg>
<svg style="left:628px;top:189.7px" width="16" height="12" viewBox="0 0 16 12" fill="none"><path d="M0.300 6H13.600" stroke="#adadad" stroke-width="1.600"/><path d="M10.900 3.100L14.500 6L10.900 8.900" stroke="#8c8c8c" stroke-width="1.600" stroke-linejoin="miter"/></svg>
<svg style="left:649.2px;top:227.29999999999998px" width="16" height="12" viewBox="0 0 16 12" fill="none"><path d="M0.300 6H13.600" stroke="#adadad" stroke-width="1.600"/><path d="M10.900 3.100L14.500 6L10.900 8.900" stroke="#8c8c8c" stroke-width="1.600" stroke-linejoin="miter"/></svg>
<svg style="left:670.4px;top:265.5px" width="16" height="12" viewBox="0 0 16 12" fill="none"><path d="M0.300 6H13.600" stroke="#adadad" stroke-width="1.600"/><path d="M10.900 3.100L14.500 6L10.900 8.900" stroke="#8c8c8c" stroke-width="1.600" stroke-linejoin="miter"/></svg>
<svg style="left:3676px;top:354.5px" width="20" height="20" viewBox="0 0 20 20" fill="none"><path d="M4.800 6.800L10 12L15.200 6.800" stroke="#6e6e6e" stroke-width="1.700"/></svg>
<svg style="left:3676px;top:566.5px" width="20" height="20" viewBox="0 0 20 20" fill="none"><path d="M4.800 6.800L10 12L15.200 6.800" stroke="#6e6e6e" stroke-width="1.700"/></svg>
<svg style="left:3676px;top:902.5px" width="20" height="20" viewBox="0 0 20 20" fill="none"><path d="M4.800 6.800L10 12L15.200 6.800" stroke="#6e6e6e" stroke-width="1.700"/></svg>
<svg style="left:628.2px;top:1019.7px" width="16" height="12" viewBox="0 0 16 12" fill="none"><path d="M0.300 6H13.600" stroke="#adadad" stroke-width="1.600"/><path d="M10.900 3.100L14.500 6L10.900 8.900" stroke="#8c8c8c" stroke-width="1.600" stroke-linejoin="miter"/></svg>
<svg style="left:649.2px;top:1057.9px" width="16" height="12" viewBox="0 0 16 12" fill="none"><path d="M0.300 6H13.600" stroke="#adadad" stroke-width="1.600"/><path d="M10.900 3.100L14.500 6L10.900 8.900" stroke="#8c8c8c" stroke-width="1.600" stroke-linejoin="miter"/></svg>
<svg style="left:670.2px;top:1097.1000000000001px" width="16" height="12" viewBox="0 0 16 12" fill="none"><path d="M0.300 6H13.600" stroke="#adadad" stroke-width="1.600"/><path d="M10.900 3.100L14.500 6L10.900 8.900" stroke="#8c8c8c" stroke-width="1.600" stroke-linejoin="miter"/></svg>
<svg style="left:691.2px;top:1135.5px" width="16" height="12" viewBox="0 0 16 12" fill="none"><path d="M0.300 6H13.600" stroke="#adadad" stroke-width="1.600"/><path d="M10.900 3.100L14.500 6L10.900 8.900" stroke="#8c8c8c" stroke-width="1.600" stroke-linejoin="miter"/></svg>
<svg style="left:712.4px;top:1173.5px" width="16" height="12" viewBox="0 0 16 12" fill="none"><path d="M0.300 6H13.600" stroke="#adadad" stroke-width="1.600"/><path d="M10.900 3.100L14.500 6L10.900 8.900" stroke="#8c8c8c" stroke-width="1.600" stroke-linejoin="miter"/></svg>
<svg style="left:3676px;top:1262.5px" width="20" height="20" viewBox="0 0 20 20" fill="none"><path d="M4.800 6.800L10 12L15.200 6.800" stroke="#6e6e6e" stroke-width="1.700"/></svg>
<svg style="left:3579.9px;top:1339.6px" width="24.6" height="24.6" viewBox="0 0 24 24" fill="#3a3a3a" ><path d="M12 16l-5-5 1.400-1.450 2.600 2.600V4h2v8.150l2.600-2.600L17 11zm-6 4q-.825 0-1.412-.587T4 18v-3h2v3h12v-3h2v3q0 .825-.587 1.413T18 20z"/></svg>
<svg style="left:3676px;top:2194.5px" width="20" height="20" viewBox="0 0 20 20" fill="none"><path d="M7.400 4.800L12.600 10L7.400 15.200" stroke="#6e6e6e" stroke-width="1.700"/></svg>
<svg style="left:3676px;top:2282.5px" width="20" height="20" viewBox="0 0 20 20" fill="none"><path d="M7.400 4.800L12.600 10L7.400 15.200" stroke="#6e6e6e" stroke-width="1.700"/></svg>
</div></body></html>
